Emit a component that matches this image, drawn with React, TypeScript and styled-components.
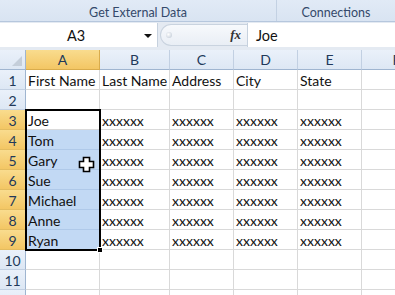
import React from "react";
import styled, { createGlobalStyle, css } from "styled-components";

const GlobalStyle = createGlobalStyle`
  html, body { margin: 0; padding: 0; background: #ffffff; }
  body { font-family: Lato, "Liberation Sans", sans-serif; overflow: hidden; }
  * { box-sizing: border-box; }
`;

const Page = styled.div`
  width: 395px;
  height: 295px;
  overflow: hidden;
  display: flex;
  flex-direction: column;
  background: #ffffff;
`;

const Ribbon = styled.div`
  height: 22px;
  display: flex;
  background: linear-gradient(#e1eaf6, #d9e4f2);
  border-bottom: 1px solid #b6c7dd;
  flex-shrink: 0;
`;

const GroupLabel = styled.div<{ $w?: number }>`
  ${(p) => (p.$w ? css`width: ${p.$w}px;` : css`flex: 1;`)}
  display: flex;
  align-items: center;
  justify-content: center;
  padding-top: 4px;
  font-size: 12.5px;
  color: #34496a;
  ${(p) => p.$w && css`border-right: 1px solid #c3d1e3;`}
`;

const FormulaBar = styled.div`
  height: 28px;
  display: flex;
  align-items: flex-start;
  background: #e4eaf2;
  flex-shrink: 0;
  padding-top: 1px;
`;

const NameBox = styled.div`
  width: 158px;
  height: 24px;
  background: #ffffff;
  display: flex;
  align-items: center;
  border-right: 1px solid #c6d1de;
`;

const NameText = styled.span`
  flex: 1;
  text-align: center;
  font-size: 14.5px;
  color: #111;
  padding-left: 8px;
`;

const DropArrow = styled.span`
  width: 0;
  height: 0;
  border-left: 4px solid transparent;
  border-right: 4px solid transparent;
  border-top: 4px solid #111;
  margin-right: 5px;
  margin-top: 1px;
`;

const Grip = styled.div`
  width: 87px;
  height: 22px;
  margin-top: 1px;
  margin-left: 2px;
  border-radius: 11px 0 0 11px;
  background: linear-gradient(#f7f9fc, #e9eef5);
  border: 1px solid #c9d3df;
  border-right: none;
  display: flex;
  align-items: center;
  justify-content: space-between;
  padding-left: 5px;
  padding-right: 6px;
`;

const GripDot = styled.span`
  width: 6px;
  height: 6px;
  border-radius: 50%;
  background: radial-gradient(circle at 40% 40%, #ffffff, #b9c4d2);
`;

const Fx = styled.span`
  font-family: "Liberation Serif", serif;
  font-style: italic;
  font-weight: bold;
  font-size: 13px;
  color: #333;
`;

const FormulaInput = styled.div`
  flex: 1;
  height: 24px;
  background: #ffffff;
  border-left: 1px solid #c6d1de;
  display: flex;
  align-items: center;
  padding-left: 8px;
  font-size: 14.5px;
  color: #111;
`;

const SheetWrap = styled.div`
  position: relative;
  width: 432px;
`;

const Grid = styled.div`
  display: grid;
  grid-template-columns: 26px 74px 70px 64px 64px 64px 70px;
  grid-auto-rows: 20px;
`;

const HeaderCell = styled.div<{ $active?: boolean; $row?: boolean }>`
  display: flex;
  align-items: center;
  justify-content: center;
  font-size: 14px;
  color: #22395a;
  background: ${(p) =>
    p.$active
      ? "linear-gradient(#f9dc8e, #f3c664)"
      : "linear-gradient(#eaf1fa, #dde7f4)"};
  border-right: 1px solid ${(p) => (p.$active ? "#d9ac4c" : "#c2d0e2")};
  border-bottom: 1px solid ${(p) => (p.$active ? "#d9ac4c" : "#9fb5d0")};
  ${(p) =>
    p.$row &&
    css`
      border-right: 1px solid ${p.$active ? "#d9ac4c" : "#9fb5d0"};
      border-bottom: 1px solid ${p.$active ? "#e4bc5f" : "#c2d0e2"};
      padding-top: 1px;
    `}
`;

const Corner = styled.div`
  background: linear-gradient(#eaf1fa, #dde7f4);
  border-right: 1px solid #9fb5d0;
  border-bottom: 1px solid #9fb5d0;
  position: relative;
  &::after {
    content: "";
    position: absolute;
    right: 3px;
    bottom: 3px;
    width: 0;
    height: 0;
    border-left: 10px solid transparent;
    border-bottom: 10px solid #c4ceda;
  }
`;

const Cell = styled.div<{ $sel?: boolean }>`
  display: flex;
  align-items: center;
  padding: 2px 0 0 2px;
  font-size: 14px;
  color: #111;
  white-space: nowrap;
  overflow: hidden;
  background: ${(p) => (p.$sel ? "#c2d9f4" : "#ffffff")};
  border-right: 1px solid ${(p) => (p.$sel ? "#afc9e9" : "#d9d9d9")};
  border-bottom: 1px solid ${(p) => (p.$sel ? "#afc9e9" : "#d9d9d9")};
`;

const Selection = styled.div`
  position: absolute;
  left: 25px;
  top: 59px;
  width: 76px;
  height: 142px;
  border: 2px solid #000;
  pointer-events: none;
`;

const FillHandle = styled.div`
  position: absolute;
  right: -4px;
  bottom: -4px;
  width: 6px;
  height: 6px;
  background: #000;
  border: 1px solid #fff;
`;

const Cursor = styled.svg`
  position: absolute;
  left: 78px;
  top: 106px;
`;

const cols = ["A", "B", "C", "D", "E", "F"];
const names = ["Joe", "Tom", "Gary", "Sue", "Michael", "Anne", "Ryan"];

function rowData(r: number): string[] {
  if (r === 1) return ["First Name", "Last Name", "Address", "City", "State", ""];
  if (r >= 3 && r <= 9) return [names[r - 3], "xxxxxx", "xxxxxx", "xxxxxx", "xxxxxx", ""];
  return ["", "", "", "", "", ""];
}

export default function App() {
  const rows = Array.from({ length: 12 }, (_, i) => i + 1);
  return (
    <Page>
      <GlobalStyle />
      <Ribbon>
        <GroupLabel $w={277}>Get External Data</GroupLabel>
        <GroupLabel>Connections</GroupLabel>
      </Ribbon>
      <FormulaBar>
        <NameBox>
          <NameText>A3</NameText>
          <DropArrow />
        </NameBox>
        <Grip>
          <GripDot />
          <Fx>fx</Fx>
        </Grip>
        <FormulaInput>Joe</FormulaInput>
      </FormulaBar>
      <SheetWrap>
        <Grid>
          <Corner />
          {cols.map((c) => (
            <HeaderCell key={c} $active={c === "A"}>
              {c}
            </HeaderCell>
          ))}
          {rows.map((r) => {
            const data = rowData(r);
            return (
              <React.Fragment key={r}>
                <HeaderCell $row $active={r >= 3 && r <= 9}>
                  {r}
                </HeaderCell>
                {data.map((v, i) => (
                  <Cell key={i} $sel={i === 0 && r >= 4 && r <= 9}>
                    {v}
                  </Cell>
                ))}
              </React.Fragment>
            );
          })}
        </Grid>
        <Selection>
          <FillHandle />
        </Selection>
        <Cursor width="17" height="17" viewBox="0 0 17 17">
          <path
            d="M5.5 1.5 H11.5 V5.5 H15.5 V11.5 H11.5 V15.5 H5.5 V11.5 H1.5 V5.5 H5.5 Z"
            fill="#ffffff"
            stroke="#000"
            strokeWidth="1.6"
          />
        </Cursor>
      </SheetWrap>
    </Page>
  );
}
